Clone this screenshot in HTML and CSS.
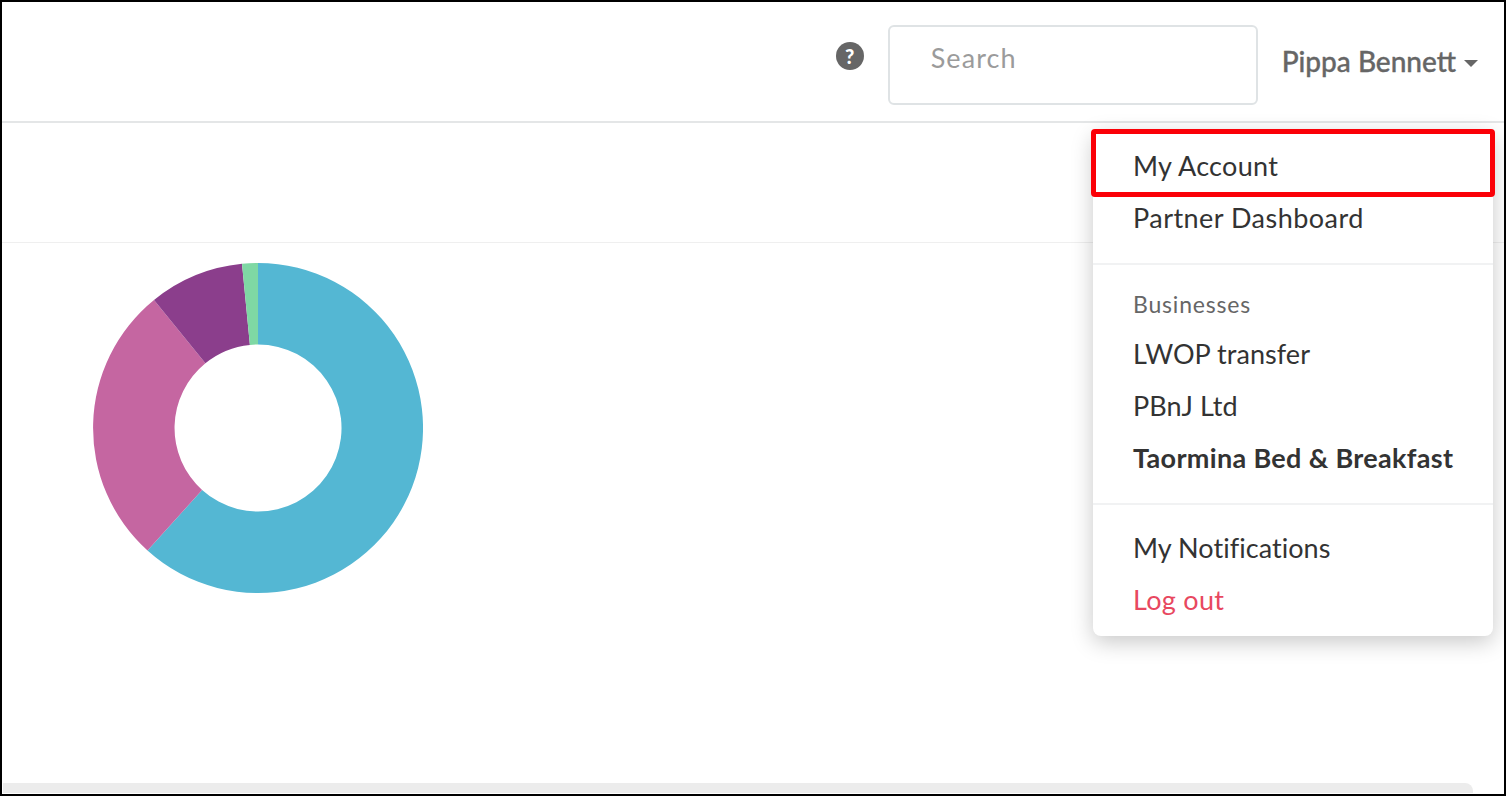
FILE: index.html
```html
<!DOCTYPE html>
<html lang="en">
<head>
<meta charset="utf-8">
<title>Dashboard</title>
<link rel="stylesheet" href="styles.css">
</head>
<body>
<div class="frame">
  <header class="topbar">
    <span class="help">?</span>
    <input class="search" type="text" placeholder="Search">
    <div class="user">
      <span class="user-name">Pippa Bennett</span>
      <span class="caret"></span>
    </div>
  </header>
  <div class="toolbar"></div>
  <main class="content">
    <svg class="donut" viewBox="-165 -165 330 330" width="330" height="330" role="img" aria-label="Donut chart">
      <path class="seg-blue" d="M0,-165 A165 165 0 1 1 -110.5,122.5 L-55.9,62 A83.5 83.5 0 1 0 0,-83.5 Z"/>
      <path class="seg-pink" d="M-110.5,122.5 A165 165 0 0 1 -104,-128 L-52.6,-64.8 A83.5 83.5 0 0 0 -55.9,62 Z"/>
      <path class="seg-purple" d="M-104,-128 A165 165 0 0 1 -16,-164.2 L-8.1,-83.1 A83.5 83.5 0 0 0 -52.6,-64.8 Z"/>
      <path class="seg-green" d="M-16,-164.2 A165 165 0 0 1 0,-165 L0,-83.5 A83.5 83.5 0 0 0 -8.1,-83.1 Z"/>
    </svg>
  </main>
  <div class="scrollbar"></div>

  <nav class="menu">
    <div class="menu-group">
      <a class="menu-item menu-account">My Account</a>
      <a class="menu-item menu-partner">Partner Dashboard</a>
    </div>
    <div class="menu-group menu-businesses">
      <div class="menu-label">Businesses</div>
      <a class="menu-item">LWOP transfer</a>
      <a class="menu-item">PBnJ Ltd</a>
      <a class="menu-item menu-current">Taormina Bed &amp; Breakfast</a>
    </div>
    <div class="menu-group menu-last">
      <a class="menu-item">My Notifications</a>
      <a class="menu-item menu-danger">Log out</a>
    </div>
    <div class="highlight"></div>
  </nav>
</div>
</body>
</html>
```
FILE: styles.css
```css
* { box-sizing: border-box; }

html, body {
  margin: 0;
  height: 100%;
  background: #fff;
}

body {
  font-family: "Lato", "Open Sans", sans-serif;
  color: #333;
  overflow: hidden;
}

.frame {
  position: relative;
  display: flex;
  flex-direction: column;
  width: 1506px;
  height: 796px;
  border: 2px solid #000;
  background: #fff;
}

.topbar {
  display: flex;
  justify-content: flex-end;
  align-items: flex-start;
  height: 121px;
  padding: 23px 26px 0 0;
  border-bottom: 2px solid #e4e6e7;
}

.help {
  width: 28px;
  height: 28px;
  margin: 17px 24px 0 0;
  border-radius: 50%;
  background: #666;
  color: #fff;
  font-size: 20px;
  font-weight: 900;
  line-height: 28px;
  text-align: center;
}

.search {
  width: 370px;
  height: 80px;
  padding: 0 20px 16px 41px;
  border: 2px solid #dfe3e5;
  border-radius: 6px;
  background: #fff;
  font-family: inherit;
  font-size: 27px;
  color: #333;
  letter-spacing: 1.1px;
  outline: none;
}

.search::placeholder {
  color: #9b9b9b;
  opacity: 1;
}

.user {
  display: flex;
  align-items: center;
  margin: 18px 0 0 24px;
  color: #666;
}

.user-name {
  font-size: 28px;
  font-weight: 500;
  line-height: 36px;
  -webkit-text-stroke: 0.35px #666;
}

.caret {
  width: 0;
  height: 0;
  margin: 4px 0 0 8px;
  border-style: solid;
  border-width: 7px 7px 0;
  border-color: #666 transparent transparent;
}

.toolbar {
  height: 120px;
  border-bottom: 1px solid #efefef;
}

.content {
  flex: 1;
  padding: 20px 0 0 91px;
}

.donut {
  display: block;
}

.seg-blue { fill: #54b7d3; }
.seg-pink { fill: #c566a1; }
.seg-purple { fill: #8b3e8c; }
.seg-green { fill: #7fd8a4; }

.scrollbar {
  height: 10px;
  margin: 0 31px 1px 1px;
  background: #ececec;
  border-top-right-radius: 8px;
}

.menu {
  position: absolute;
  top: 128px;
  left: 1091px;
  width: 400px;
  padding: 10px 0;
  border-radius: 8px;
  background: #fff;
  box-shadow: 0 6px 22px rgba(0, 0, 0, 0.22);
}

.menu-group {
  display: flex;
  flex-direction: column;
}

.menu-group:first-child {
  padding-bottom: 19px;
}

.menu-businesses {
  padding: 20px 0 19px;
  border-top: 2px solid #f1f2f3;
  border-bottom: 2px solid #f1f2f3;
}

.menu-last {
  padding-top: 17px;
}

.menu-item {
  padding: 0 40px;
  font-size: 27px;
  line-height: 52px;
  color: #333;
  letter-spacing: 0.05px;
  white-space: nowrap;
}

.menu-account {
  letter-spacing: 0.3px;
}

.menu-partner {
  letter-spacing: 0.47px;
}

.menu-label {
  margin-bottom: 4px;
  padding: 0 40px;
  font-size: 23px;
  line-height: 39px;
  letter-spacing: 0.8px;
  color: #666;
}

.menu-current {
  font-weight: 700;
  letter-spacing: 0.33px;
}

.menu-danger {
  color: #e8485f;
  letter-spacing: 0.3px;
}

.highlight {
  position: absolute;
  top: -1px;
  left: -2px;
  width: 404px;
  height: 68px;
  border: 5px solid #fb0007;
  border-radius: 4px;
}
```
